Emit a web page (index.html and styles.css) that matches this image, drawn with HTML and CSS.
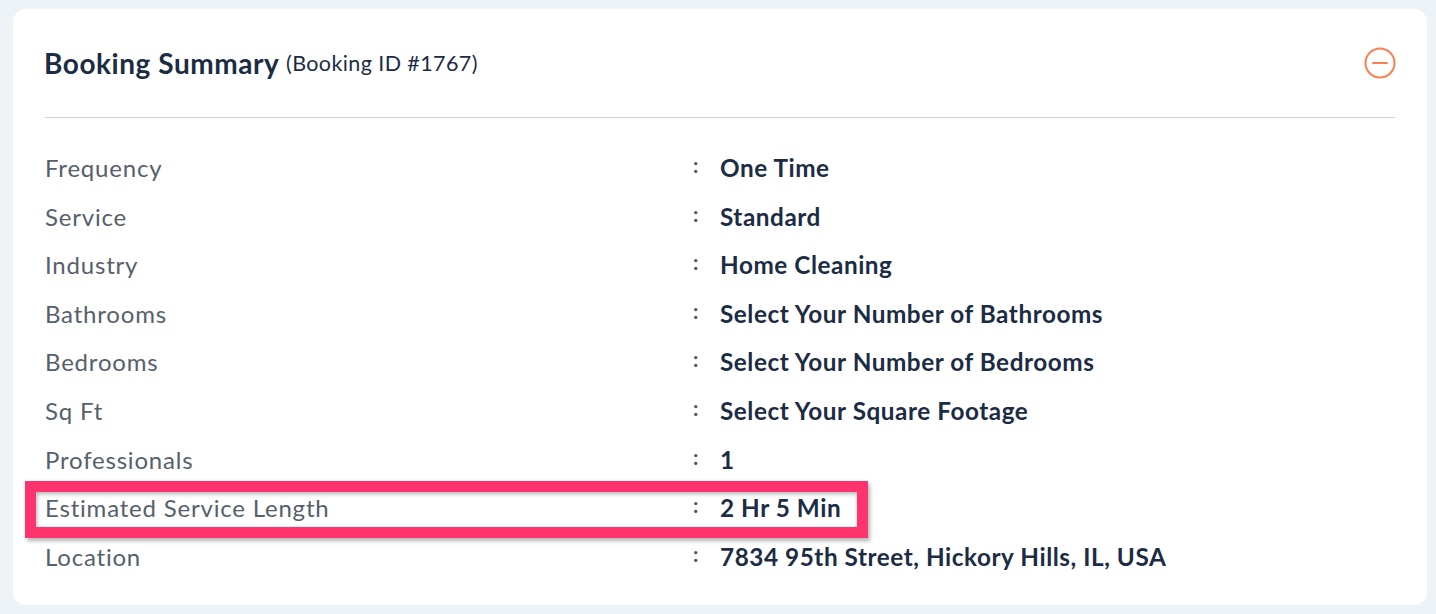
FILE: index.html
```html
<!DOCTYPE html>
<html lang="en">
<head>
<meta charset="utf-8">
<title>Booking Summary</title>
<link rel="stylesheet" href="styles.css">
</head>
<body>
<section class="card">
  <header class="card-head">
    <h2 class="title">Booking Summary <span class="booking-id">(Booking ID #1767)</span></h2>
    <button class="toggle" aria-label="Collapse">
      <svg width="32" height="32" viewBox="0 0 32 32" fill="none" stroke="#ff7d52" stroke-width="2" stroke-linecap="round">
        <circle cx="16" cy="16" r="14.5"/>
        <line x1="9" y1="16" x2="23" y2="16"/>
      </svg>
    </button>
  </header>
  <dl class="rows">
    <div class="row"><dt class="label">Frequency</dt><span class="colon">:</span><dd class="value">One Time</dd></div>
    <div class="row"><dt class="label">Service</dt><span class="colon">:</span><dd class="value">Standard</dd></div>
    <div class="row"><dt class="label">Industry</dt><span class="colon">:</span><dd class="value">Home Cleaning</dd></div>
    <div class="row"><dt class="label">Bathrooms</dt><span class="colon">:</span><dd class="value">Select Your Number of Bathrooms</dd></div>
    <div class="row"><dt class="label">Bedrooms</dt><span class="colon">:</span><dd class="value">Select Your Number of Bedrooms</dd></div>
    <div class="row"><dt class="label">Sq Ft</dt><span class="colon">:</span><dd class="value">Select Your Square Footage</dd></div>
    <div class="row"><dt class="label">Professionals</dt><span class="colon">:</span><dd class="value">1</dd></div>
    <div class="row row-highlight"><dt class="label">Estimated Service Length</dt><span class="colon">:</span><dd class="value">2 Hr 5 Min</dd></div>
    <div class="row"><dt class="label">Location</dt><span class="colon">:</span><dd class="value">7834 95th Street, Hickory Hills, IL, USA</dd></div>
  </dl>
</section>
</body>
</html>
```

FILE: styles.css
```css
*, *::before, *::after { box-sizing: border-box; }

html, body {
  margin: 0;
  background: #eef3f8;
}

body {
  padding: 9px 9px 9px 13px;
  font-family: Lato, "Open Sans", Arial, sans-serif;
}

.card {
  background: #ffffff;
  border-radius: 13px;
  padding: 0 32px 24px 32px;
  height: 596px;
}

.card-head {
  height: 109px;
  display: flex;
  align-items: center;
  justify-content: space-between;
  border-bottom: 1px solid #cdd3da;
  padding-bottom: 1px;
}

.title {
  margin: 0;
  font-size: 28px;
  font-weight: 700;
  color: #1b2c44;
  letter-spacing: 0.55px;
  margin-left: -1px;
}

.booking-id {
  font-size: 21.5px;
  font-weight: 400;
  letter-spacing: 0.4px;
  margin-left: 0;
  position: relative;
  top: -3px;
}

.toggle {
  border: 0;
  background: none;
  padding: 0;
  width: 32px;
  height: 32px;
  margin-right: -1px;
  display: flex;
  cursor: pointer;
}

.rows {
  margin: 0;
  padding-top: 26px;
}

.row {
  position: relative;
  display: grid;
  grid-template-columns: calc(50% - 27px) 27px 1fr;
  height: 48.6px;
  line-height: 48.6px;
  font-size: 24px;
}

.label {
  margin: 0;
  color: #56606c;
  letter-spacing: 0.8px;
}

.colon {
  color: #4a5562;
  font-size: 21px;
  font-weight: 700;
  position: relative;
  top: -3px;
}

.value {
  margin: 0;
  color: #1b2c44;
  font-weight: 700;
  font-size: 24.3px;
  letter-spacing: 0.55px;
}

.row-highlight::after {
  content: "";
  position: absolute;
  left: -20px;
  top: -3px;
  width: 843px;
  height: 57px;
  border: 11px solid #ff346f;
  box-shadow: 2px 3px 4px rgba(0, 0, 0, 0.3), inset 1px 2px 4px rgba(0, 0, 0, 0.3);
  pointer-events: none;
}
```
